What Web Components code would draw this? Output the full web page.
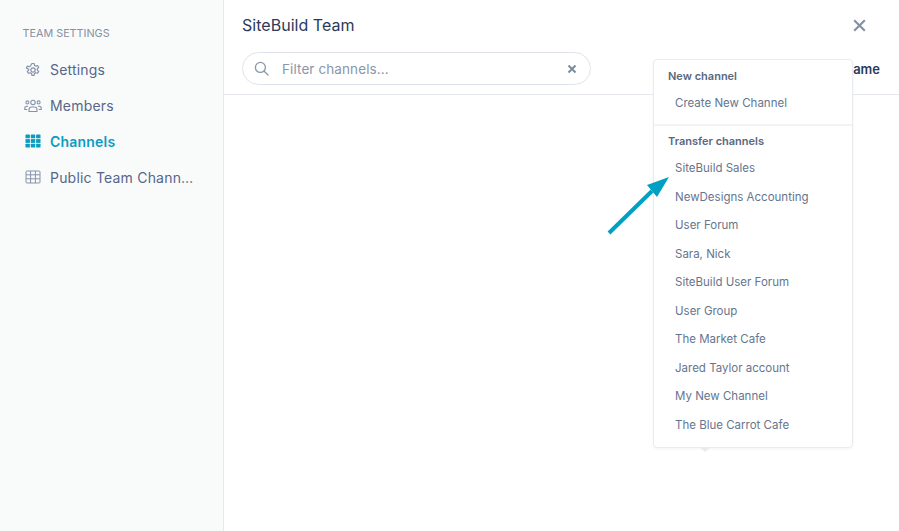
<!DOCTYPE html>
<html>
<head>
<meta charset="utf-8">
<style>
  html, body { margin: 0; height: 100%; background: #fff; }
  body { font-family: Inter, "Liberation Sans", sans-serif; overflow: hidden; }
</style>
</head>
<body>
<team-settings></team-settings>

<script>
(function () {
  'use strict';

  // ---- sidebar ----
  const ICONS = {
    settings: `<svg viewBox="0 0 16 16" width="16" height="16" fill="none" stroke="currentColor" stroke-width="1.2" stroke-linejoin="round"><path d="M6.9 1.5h2.2l.4 1.9 1.2.7 1.9-.6 1.1 1.9-1.4 1.3v1.4l1.4 1.3-1.1 1.9-1.9-.6-1.2.7-.4 1.9H6.9l-.4-1.9-1.2-.7-1.9.6-1.1-1.9 1.4-1.3V7.3L1.3 6l1.1-1.9 1.9.6 1.2-.7z"/><circle cx="8" cy="8" r="2.2"/></svg>`,
    members: `<svg viewBox="0 0 18 14" width="18" height="14" fill="none" stroke="currentColor" stroke-width="1.1"><circle cx="9" cy="3.4" r="2.2"/><circle cx="3.4" cy="3.4" r="1.5"/><circle cx="14.6" cy="3.4" r="1.5"/><path d="M5 12.5v-1.6C5 9.3 6.2 8 7.6 8h2.8c1.4 0 2.6 1.3 2.6 2.9v1.6z"/><path d="M3.3 10.5H.8v-1c0-1.3.8-2.2 2-2.2h1.3M14.7 10.5h2.5v-1c0-1.3-.8-2.2-2-2.2h-1.3"/></svg>`,
    channels: `<svg viewBox="0 0 16 14" width="16" height="14" fill="currentColor"><rect x="0.5" y="0.5" width="4.4" height="3.8" rx=".5"/><rect x="5.8" y="0.5" width="4.4" height="3.8" rx=".5"/><rect x="11.1" y="0.5" width="4.4" height="3.8" rx=".5"/><rect x="0.5" y="5.1" width="4.4" height="3.8"/><rect x="5.8" y="5.1" width="4.4" height="3.8"/><rect x="11.1" y="5.1" width="4.4" height="3.8"/><rect x="0.5" y="9.7" width="4.4" height="3.8" rx=".5"/><rect x="5.8" y="9.7" width="4.4" height="3.8" rx=".5"/><rect x="11.1" y="9.7" width="4.4" height="3.8" rx=".5"/></svg>`,
    table: `<svg viewBox="0 0 16 14" width="16" height="14" fill="none" stroke="currentColor" stroke-width="1"><rect x="1" y="1" width="14" height="12" rx="1"/><path d="M1 4.8h14M1 8.8h14M5.6 1v12M10.4 1v12"/></svg>`,
  };

  class SideItem extends HTMLElement {
    connectedCallback() {
      const root = this.attachShadow({ mode: 'open' });
      const icon = ICONS[this.getAttribute('icon')] || '';
      root.innerHTML = `
        <style>
          :host {
            display: flex;
            align-items: center;
            height: 35.8px;
            padding-left: 24px;
            color: #56668a;
            font-size: 14px;
          }
          :host([active]) { color: #0b9cc2; font-weight: 600; }
          .icon {
            width: 18px;
            margin-right: 8px;
            display: flex;
            justify-content: center;
            color: #8793a8;
          }
          :host([active]) .icon { color: #0b9cc2; }
          .label { white-space: nowrap; letter-spacing: .2px; }
        </style>
        <span class="icon">${icon}</span>
        <span class="label"><slot></slot></span>
      `;
    }
  }
  customElements.define('side-item', SideItem);

  class SideBar extends HTMLElement {
    constructor() {
      super();
      this.attachShadow({ mode: 'open' }).innerHTML = `
        <style>
          :host {
            display: block;
            box-sizing: border-box;
            width: 224px;
            flex-shrink: 0;
            height: 100%;
            background: #f9fbfb;
            border-right: 1px solid #e5e8ec;
            padding-top: 27px;
          }
          h4 {
            margin: 0 0 12px 22.5px;
            font-size: 10.8px;
            line-height: 13px;
            font-weight: 400;
            color: #8590a3;
          }
        </style>
        <h4>TEAM SETTINGS</h4>
        <slot></slot>
      `;
    }
  }
  customElements.define('side-bar', SideBar);

  // ---- search field ----
  class SearchBox extends HTMLElement {
    constructor() {
      super();
      this.attachShadow({ mode: 'open' }).innerHTML = `
        <style>
          :host {
            display: flex;
            align-items: center;
            box-sizing: border-box;
            width: 349px;
            height: 33px;
            border: 1px solid #dfe3e9;
            border-radius: 17px;
            padding: 0 13px 0 11px;
            font-size: 13.5px;
            color: #8a96aa;
          }
          svg.find { margin-right: 13px; color: #8a96aa; }
          .text { flex: 1; letter-spacing: .1px; }
          svg.clear { color: #7d8a9e; }
        </style>
        <svg class="find" width="15" height="15" viewBox="0 0 15 15" fill="none" stroke="currentColor" stroke-width="1.3" stroke-linecap="round"><circle cx="6.4" cy="6.4" r="5"/><path d="M10.2 10.2l3.8 3.8"/></svg>
        <span class="text">Filter channels...</span>
        <svg class="clear" width="10" height="10" viewBox="0 0 10 10" fill="none" stroke="currentColor" stroke-width="2"><path d="M1.5 1.5l7 7M8.5 1.5l-7 7"/></svg>
      `;
    }
  }
  customElements.define('search-box', SearchBox);

  // ---- dropdown menu ----
  class MenuGroup extends HTMLElement {
    connectedCallback() {
      const root = this.attachShadow({ mode: 'open' });
      root.innerHTML = `
        <style>
          :host { display: block; box-sizing: border-box; height: 64px; padding-top: 9px; }
          :host([divided]) { height: auto; padding-top: 8px; border-top: 2px solid #f1f3f5; }
          h5 {
            margin: 0 0 6px 14px;
            font-size: 11px;
            line-height: 14px;
            font-weight: 600;
            color: #5a6880;
          }
        </style>
        <h5>${this.getAttribute('heading')}</h5>
        <slot></slot>
      `;
    }
  }
  customElements.define('menu-group', MenuGroup);

  class MenuItem extends HTMLElement {
    constructor() {
      super();
      this.attachShadow({ mode: 'open' }).innerHTML = `
        <style>
          :host {
            display: flex;
            align-items: center;
            height: 28.5px;
            padding-left: 21px;
            font-size: 11.5px;
            color: #66758f;
          }
        </style>
        <slot></slot>
      `;
    }
  }
  customElements.define('menu-item', MenuItem);

  class ChannelMenu extends HTMLElement {
    constructor() {
      super();
      this.attachShadow({ mode: 'open' }).innerHTML = `
        <style>
          :host {
            position: absolute;
            left: 429px;
            top: 59px;
            box-sizing: border-box;
            width: 200px;
            height: 389px;
            background: #fff;
            border: 1px solid #e9ecef;
            border-radius: 4px;
            box-shadow: 0 1px 3px rgba(30, 45, 70, .05);
          }
          .tip {
            position: absolute;
            left: 45px;
            bottom: -5px;
            width: 0;
            height: 0;
            border-left: 6px solid transparent;
            border-right: 6px solid transparent;
            border-top: 5px solid #e9ecef;
          }
        </style>
        <slot></slot>
        <span class="tip"></span>
      `;
    }
  }
  customElements.define('channel-menu', ChannelMenu);

  // ---- main panel ----
  class TeamPanel extends HTMLElement {
    constructor() {
      super();
      this.attachShadow({ mode: 'open' }).innerHTML = `
        <style>
          :host {
            display: block;
            position: relative;
            flex: 1;
            min-width: 0;
            height: 100%;
            background: #fff;
          }
          header { border-bottom: 1px solid #e5e8ec; height: 95px; box-sizing: border-box; padding: 15px 19px 0 18px; }
          .top { display: flex; justify-content: space-between; align-items: center; height: 20px; }
          h2 { margin: 0; font-size: 16px; font-weight: 400; color: #2b3b59; letter-spacing: .03px; }
          .close { color: #8491a6; margin-right: 14px; display: block; }
          .tools { display: flex; justify-content: space-between; align-items: center; margin-top: 17px; }
          .sort { font-size: 13px; font-weight: 600; color: #2b3b59; }
          .pointer { position: absolute; left: 380px; top: 170px; }
        </style>
        <header>
          <div class="top">
            <h2>SiteBuild Team</h2>
            <svg class="close" width="13" height="13" viewBox="0 0 13 13" fill="none" stroke="currentColor" stroke-width="2.2"><path d="M1.2 1.2l10.6 10.6M11.8 1.2L1.2 11.8"/></svg>
          </div>
          <div class="tools">
            <search-box></search-box>
            <span class="sort">Name</span>
          </div>
        </header>
        <slot></slot>
        <svg class="pointer" width="70" height="70" viewBox="0 0 70 70">
          <path d="M5 63L48 21" stroke="#009fc4" stroke-width="4" fill="none"/>
          <path d="M65 7L53 27 43 15z" fill="#009fc4"/>
        </svg>
      `;
    }
  }
  customElements.define('team-panel', TeamPanel);

  // ---- page ----
  class TeamSettings extends HTMLElement {
    constructor() {
      super();
      this.attachShadow({ mode: 'open' }).innerHTML = `
        <style>
          :host { display: flex; height: 531px; color: #24344f; }
        </style>
        <side-bar>
          <side-item icon="settings">Settings</side-item>
          <side-item icon="members">Members</side-item>
          <side-item icon="channels" active>Channels</side-item>
          <side-item icon="table">Public Team Chann…</side-item>
        </side-bar>
        <team-panel>
          <channel-menu>
            <menu-group heading="New channel">
              <menu-item>Create New Channel</menu-item>
            </menu-group>
            <menu-group heading="Transfer channels" divided>
              <menu-item>SiteBuild Sales</menu-item>
              <menu-item>NewDesigns Accounting</menu-item>
              <menu-item>User Forum</menu-item>
              <menu-item>Sara, Nick</menu-item>
              <menu-item>SiteBuild User Forum</menu-item>
              <menu-item>User Group</menu-item>
              <menu-item>The Market Cafe</menu-item>
              <menu-item>Jared Taylor account</menu-item>
              <menu-item>My New Channel</menu-item>
              <menu-item>The Blue Carrot Cafe</menu-item>
            </menu-group>
          </channel-menu>
        </team-panel>
      `;
    }
  }
  customElements.define('team-settings', TeamSettings);
})();
</script>
</body>
</html>
